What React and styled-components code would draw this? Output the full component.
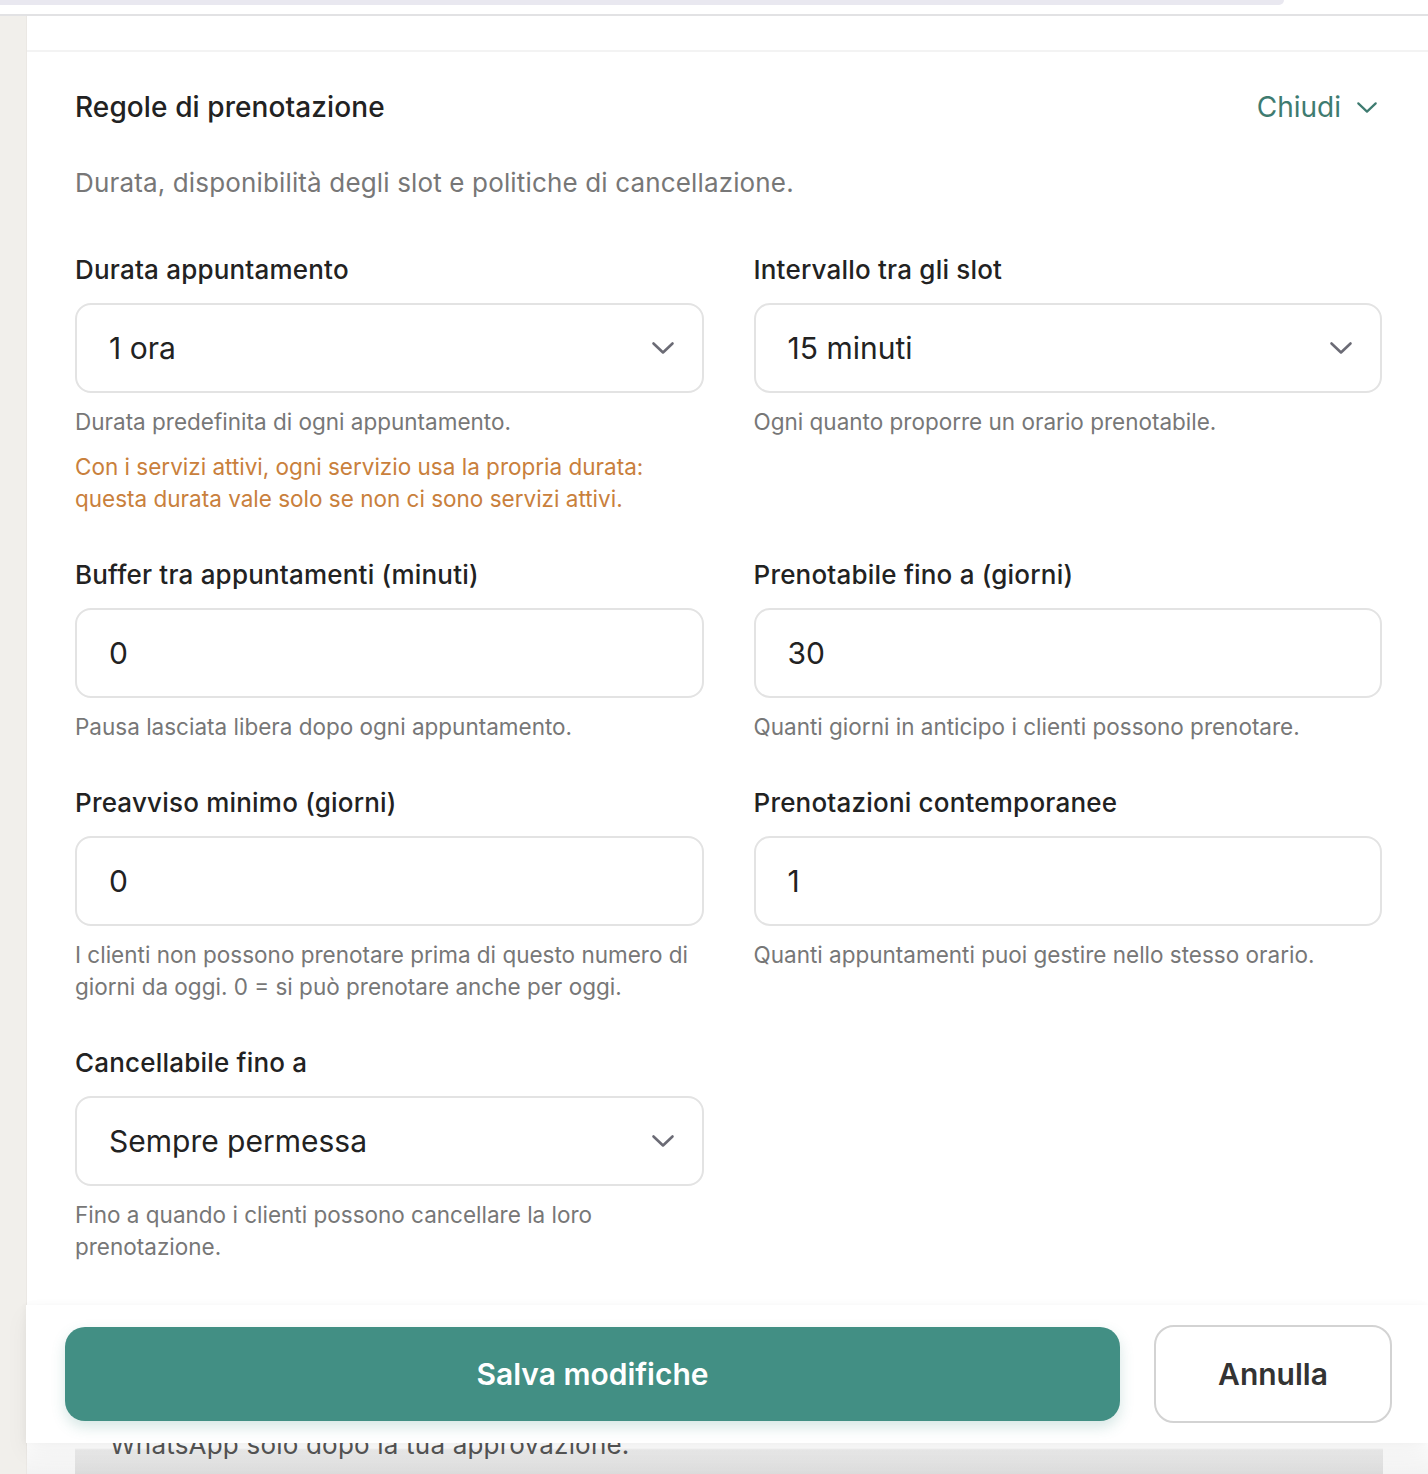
import React from "react";
import styled, { createGlobalStyle } from "styled-components";

const Global = createGlobalStyle`
  html, body { margin: 0; padding: 0; background: #ffffff; }
  body { font-family: Inter, "Noto Sans", sans-serif; overflow: hidden; }
  * { box-sizing: border-box; }
`;

const Page = styled.div`
  position: relative;
  width: 1428px;
  height: 1474px;
  overflow: hidden;
  display: flex;
  flex-direction: column;
`;

const TopBar = styled.div`
  height: 16px;
  border-bottom: 2px solid #e2e2e4;
  flex-shrink: 0;
`;

const TopTab = styled.div`
  width: 1284px;
  height: 5px;
  background: #e9e8f0;
  border-bottom-right-radius: 8px;
`;

const Body = styled.div`
  flex: 1;
  display: flex;
  min-height: 0;
`;

const Sidebar = styled.div`
  width: 27px;
  flex-shrink: 0;
  background: #f1efeb;
  border-right: 1px solid #ebe8e4;
`;

const Main = styled.div`
  flex: 1;
  display: flex;
  flex-direction: column;
  background: #fff;
`;

const SubHeader = styled.div`
  height: 36px;
  border-bottom: 2px solid #f3f3f3;
  flex-shrink: 0;
`;

const Section = styled.section`
  padding: 35px 46px 0 48px;
`;

const HeaderRow = styled.div`
  display: flex;
  align-items: center;
  justify-content: space-between;
  height: 40px;
`;

const Title = styled.h2`
  margin: 0;
  font-size: 28px;
  font-weight: 500;
  color: #222222;
  line-height: 40px;
  letter-spacing: 0.1px;
`;

const Toggle = styled.button`
  display: flex;
  align-items: center;
  gap: 15px;
  border: 0;
  background: none;
  padding: 0 4px 0 0;
  font-family: inherit;
  font-size: 28px;
  font-weight: 400;
  color: #3e7b70;
  cursor: pointer;
`;

const Description = styled.p`
  margin: 38px 0 0;
  font-size: 26px;
  line-height: 36px;
  color: #777777;
  letter-spacing: 0.15px;
`;

const Grid = styled.div`
  display: grid;
  grid-template-columns: 1fr 1fr;
  column-gap: 50px;
  row-gap: 42px;
  margin-top: 51px;
`;

const Field = styled.div`
  display: flex;
  flex-direction: column;
`;

const Label = styled.label`
  font-size: 26px;
  line-height: 36px;
  font-weight: 500;
  color: #222222;
  margin-bottom: 15px;
  letter-spacing: 0.2px;
`;

const Control = styled.div`
  height: 90px;
  border: 2px solid #e3e3e3;
  border-radius: 16px;
  background: #fff;
  display: flex;
  align-items: center;
  padding: 0 27px 0 32px;
`;

const Value = styled.span`
  flex: 1;
  font-size: 30px;
  color: #222222;
`;

const NumberInput = styled.input`
  flex: 1;
  border: 0;
  outline: none;
  background: transparent;
  font-family: inherit;
  font-size: 30px;
  color: #222222;
  padding: 0;
`;

const Help = styled.p`
  margin: 13px 0 0;
  font-size: 22.5px;
  line-height: 32px;
  color: ${(p) => (p.$warn ? "#c9803c" : "#777777")};
`;

const NextCard = styled.div`
  margin: 54px 45px 0 48px;
  background: linear-gradient(to bottom, #ffffff 0, #ffffff 131px, #efefef 133px, #e6e6e6 100%);
  padding: 112px 35px 0;
  height: 220px;
  font-size: 26px;
  line-height: 32px;
  color: #555555;
  letter-spacing: 0.2px;
`;

const Footer = styled.div`
  position: absolute;
  left: 26px;
  right: 0;
  bottom: 31px;
  display: flex;
  align-items: center;
  gap: 34px;
  padding: 20px 36px 20px 39px;
  background: #ffffff;
  box-shadow: 0 10px 22px rgba(0, 0, 0, 0.05), -2px 0 6px rgba(0, 0, 0, 0.03);
`;

const SaveButton = styled.button`
  flex: 1;
  height: 94px;
  border: 0;
  border-radius: 20px;
  background: #428f84;
  color: #ffffff;
  font-family: inherit;
  font-size: 30px;
  font-weight: 600;
  box-shadow: 0 6px 14px rgba(66, 143, 132, 0.22);
  cursor: pointer;
`;

const CancelButton = styled.button`
  width: 238px;
  height: 98px;
  border: 2px solid #d3d3d3;
  border-radius: 20px;
  background: #ffffff;
  color: #333333;
  font-family: inherit;
  font-size: 30px;
  font-weight: 600;
  cursor: pointer;
`;

const BottomFade = styled.div`
  position: absolute;
  left: 27px;
  right: 0;
  bottom: 0;
  height: 31px;
  pointer-events: none;
  background: linear-gradient(to bottom, rgba(0, 0, 0, 0), rgba(0, 0, 0, 0.05));
`;

const Chevron = ({ color = "#6b6b75", w = 24, h = 14, sw = 2.6 }) => (
  <svg width={w} height={h} viewBox="0 0 24 14" fill="none">
    <path d="M2.5 2.5 L12 11.5 L21.5 2.5" stroke={color} strokeWidth={sw} strokeLinecap="round" strokeLinejoin="round" />
  </svg>
);

const Select = ({ value }) => (
  <Control role="combobox">
    <Value>{value}</Value>
    <Chevron />
  </Control>
);

const Input = ({ value }) => (
  <Control>
    <NumberInput type="text" defaultValue={value} />
  </Control>
);

export default function App() {
  return (
    <>
      <Global />
      <Page>
        <TopBar>
          <TopTab />
        </TopBar>
        <Body>
          <Sidebar />
          <Main>
            <SubHeader />
            <Section>
              <HeaderRow>
                <Title>Regole di prenotazione</Title>
                <Toggle>
                  Chiudi
                  <Chevron color="#3e7b70" w={22} h={13} sw={2.4} />
                </Toggle>
              </HeaderRow>
              <Description>Durata, disponibilità degli slot e politiche di cancellazione.</Description>
              <Grid>
                <Field>
                  <Label>Durata appuntamento</Label>
                  <Select value="1 ora" />
                  <Help>Durata predefinita di ogni appuntamento.</Help>
                  <Help $warn>
                    Con i servizi attivi, ogni servizio usa la propria durata:
                    <br />
                    questa durata vale solo se non ci sono servizi attivi.
                  </Help>
                </Field>
                <Field>
                  <Label>Intervallo tra gli slot</Label>
                  <Select value="15 minuti" />
                  <Help>Ogni quanto proporre un orario prenotabile.</Help>
                </Field>
                <Field>
                  <Label>Buffer tra appuntamenti (minuti)</Label>
                  <Input value="0" />
                  <Help>Pausa lasciata libera dopo ogni appuntamento.</Help>
                </Field>
                <Field>
                  <Label>Prenotabile fino a (giorni)</Label>
                  <Input value="30" />
                  <Help>Quanti giorni in anticipo i clienti possono prenotare.</Help>
                </Field>
                <Field>
                  <Label>Preavviso minimo (giorni)</Label>
                  <Input value="0" />
                  <Help>
                    I clienti non possono prenotare prima di questo numero di giorni da oggi. 0 = si può prenotare anche per oggi.
                  </Help>
                </Field>
                <Field>
                  <Label>Prenotazioni contemporanee</Label>
                  <Input value="1" />
                  <Help>Quanti appuntamenti puoi gestire nello stesso orario.</Help>
                </Field>
                <Field>
                  <Label>Cancellabile fino a</Label>
                  <Select value="Sempre permessa" />
                  <Help>Fino a quando i clienti possono cancellare la loro prenotazione.</Help>
                </Field>
              </Grid>
            </Section>
            <NextCard>WhatsApp solo dopo la tua approvazione.</NextCard>
          </Main>
        </Body>
        <Footer>
          <SaveButton>Salva modifiche</SaveButton>
          <CancelButton>Annulla</CancelButton>
        </Footer>
        <BottomFade />
      </Page>
    </>
  );
}
